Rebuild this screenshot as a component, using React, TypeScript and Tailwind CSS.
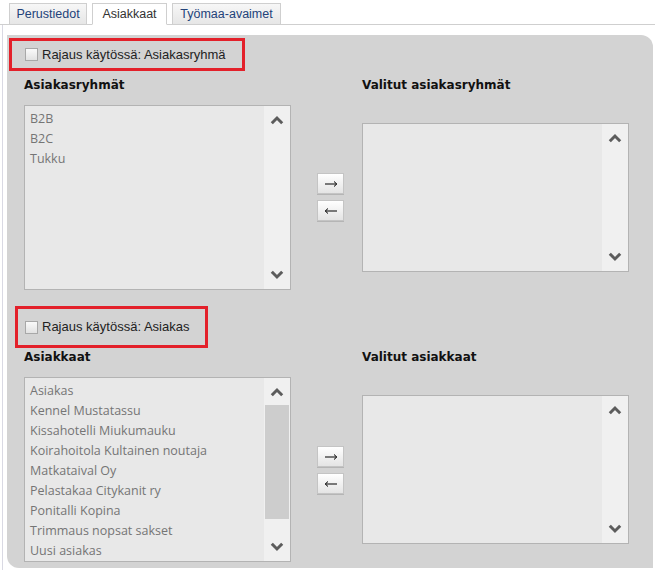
import React from "react";

const UI = { fontFamily: '"Liberation Sans", Arial, sans-serif' };
const BOLD = { fontFamily: '"DejaVu Sans", Verdana, sans-serif' };
const LIST = { fontFamily: '"Open Sans", "Liberation Sans", sans-serif' };

function Chevron({ up }: { up?: boolean }) {
  return (
    <svg width="14" height="10" viewBox="0 0 14 10">
      <path
        d={up ? "M1.8 8.2 L7 3 L12.2 8.2" : "M1.8 1.8 L7 7 L12.2 1.8"}
        fill="none"
        stroke="#5c5c5c"
        strokeWidth="3"
      />
    </svg>
  );
}

function Arrow({ left }: { left?: boolean }) {
  return (
    <svg width="14" height="8" viewBox="0 0 14 8">
      <g transform={left ? "translate(14 0) scale(-1 1)" : undefined} stroke="#000" fill="none" strokeWidth="1">
        <path d="M1 4 H12.5" />
        <path d="M10 1.5 L12.8 4 L10 6.5" />
      </g>
    </svg>
  );
}

function ListBox({
  items,
  height,
  thumb,
}: {
  items: string[];
  height: number;
  thumb?: boolean;
}) {
  return (
    <div
      className="flex w-[267px] border border-[#b3b3b3] bg-[#e8e8e8]"
      style={{ height }}
    >
      <div className="flex-1 pl-[5px] pt-[3px] text-[12.5px] leading-[20px] text-[#757575]" style={LIST}>
        {items.map((it) => (
          <div key={it} className="whitespace-nowrap">
            {it}
          </div>
        ))}
      </div>
      <div className="flex w-[26px] flex-col bg-[#f0f0f0]">
        <div className="flex h-[27px] items-center justify-center pt-[1px]">
          <Chevron up />
        </div>
        <div className="flex-1 px-[1px]">
          {thumb && <div className="h-[114px] bg-[#cdcdcd]" />}
        </div>
        <div className="flex h-[28px] items-center justify-center">
          <Chevron />
        </div>
      </div>
    </div>
  );
}

function MoveButton({ left }: { left?: boolean }) {
  return (
    <button
      type="button"
      className="flex h-[21px] w-[27px] items-center justify-center border border-[#c4c4c4] bg-gradient-to-b from-white to-[#e4e4e4] shadow-[0_1px_0_#b5b5b5]"
    >
      <Arrow left={left} />
    </button>
  );
}

function Checkbox() {
  return (
    <span className="inline-block h-[13px] w-[13px] border border-[#a8a8a8] bg-gradient-to-b from-[#fafafa] to-[#e2e2e2]" />
  );
}

function Section({
  toggle,
  boxClass,
  labelTop,
  buttonsTop,
  left,
  right,
  items,
  thumb,
}: {
  toggle: string;
  boxClass: string;
  labelTop: string;
  buttonsTop: string;
  left: string;
  right: string;
  items: string[];
  thumb?: boolean;
}) {
  return (
    <div>
      <div className={`flex items-center border-[3px] border-[#e3202a] ${boxClass}`}>
        <Checkbox />
        <span className="ml-[4px] text-[13px] text-[#222]" style={UI}>
          {toggle}
        </span>
      </div>
      <div className="ml-[15px] flex items-start">
        <div>
          <div className={`${labelTop} mb-[13px] h-[14px] text-[12px] font-bold leading-[14px] text-[#111]`} style={BOLD}>
            {left}
          </div>
          <ListBox items={items} height={185} thumb={thumb} />
        </div>
        <div className={`${buttonsTop} ml-[26px] flex flex-col gap-[6px]`}>
          <MoveButton />
          <MoveButton left />
        </div>
        <div className="ml-[18px]">
          <div className={`${labelTop} mb-[31px] h-[14px] text-[12px] font-bold leading-[14px] text-[#111]`} style={BOLD}>
            {right}
          </div>
          <ListBox items={[]} height={149} />
        </div>
      </div>
    </div>
  );
}

export default function App() {
  const tabs = [
    { name: "Perustiedot", w: "w-[78px]", active: false },
    { name: "Asiakkaat", w: "w-[75px]", active: true },
    { name: "Työmaa-avaimet", w: "w-[109px]", active: false },
  ];
  return (
    <div className="h-[570px] w-[655px] overflow-hidden bg-white">
      <div className="flex h-[25px] items-end gap-[5px] border-b border-[#cfcfcf] pl-[9px]">
        {tabs.map((t) => (
          <div
            key={t.name}
            className={`${t.w} -mb-px flex h-[22px] items-center justify-center border border-[#cfcfcf] text-[12.5px] ${
              t.active
                ? "border-b-white bg-white text-[#333]"
                : "bg-gradient-to-b from-[#f7f7f7] to-[#e6e6e6] text-[#23437a]"
            }`}
            style={UI}
          >
            {t.name}
          </div>
        ))}
      </div>
      <div className="ml-[2px] h-[545px] border-l border-[#d9d9e3] pl-[4px] pt-[10px]">
        <div className="h-[533px] w-[646px] rounded-tr-[12px] rounded-bl-[12px] bg-[#d3d3d3] pl-[2px] pt-[3px]">
          <Section
            toggle="Rajaus käytössä: Asiakasryhmä"
            boxClass="h-[33px] w-[236px] pl-[13px]"
            labelTop="mt-[7px]"
            buttonsTop="mt-[102px]"
            left="Asiakasryhmät"
            right="Valitut asiakasryhmät"
            items={["B2B", "B2C", "Tukku"]}
          />
          <div className="h-[16px]" />
          <Section
            toggle="Rajaus käytössä: Asiakas"
            boxClass="ml-[6px] h-[42px] w-[193px] pl-[7px]"
            labelTop="mt-[2px]"
            buttonsTop="mt-[98px]"
            left="Asiakkaat"
            right="Valitut asiakkaat"
            items={[
              "Asiakas",
              "Kennel Mustatassu",
              "Kissahotelli Miukumauku",
              "Koirahoitola Kultainen noutaja",
              "Matkataival Oy",
              "Pelastakaa Citykanit ry",
              "Ponitalli Kopina",
              "Trimmaus nopsat sakset",
              "Uusi asiakas",
            ]}
            thumb
          />
        </div>
      </div>
    </div>
  );
}
